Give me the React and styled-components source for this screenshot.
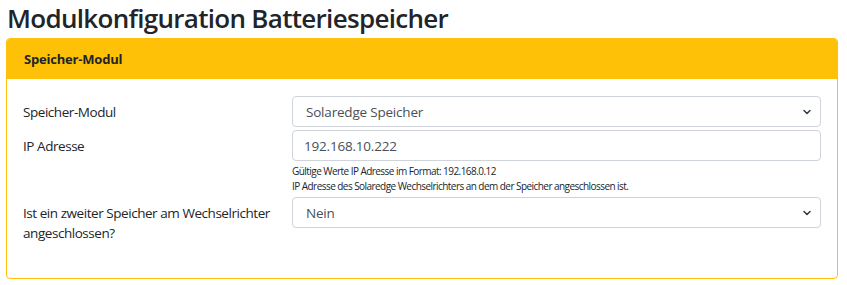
import React from "react";
import styled, { createGlobalStyle } from "styled-components";

const Global = createGlobalStyle`
  html, body { margin: 0; padding: 0; background: #fff; }
  body {
    font-family: "Open Sans", "Noto Sans", "Liberation Sans", sans-serif;
    color: #212529;
  }
  * { box-sizing: border-box; }
`;

const Page = styled.div`
  padding: 2px 9px 0 6px;
`;

const Title = styled.h1`
  margin: 0 0 4px 1px;
  font-size: 26px;
  font-weight: 600;
  line-height: 32px;
  color: #212529;
  letter-spacing: -0.7px;
`;

const Card = styled.section`
  border: 1px solid #ffc107;
  border-radius: 4px;
  overflow: hidden;
`;

const CardHeader = styled.header`
  background: #ffc107;
  height: 40px;
  display: flex;
  align-items: center;
  padding: 0 17px;
  font-size: 13px;
  font-weight: 700;
  letter-spacing: -0.2px;
  color: #212529;
`;

const CardBody = styled.div`
  padding: 17px 16px 35px 16px;
  display: flex;
  flex-direction: column;
  gap: 3px;
`;

const Row = styled.div`
  display: grid;
  grid-template-columns: 269px 1fr;
  align-items: start;
`;

const Label = styled.label`
  font-size: 13.5px;
  line-height: 20px;
  padding-top: 6px;
  letter-spacing: -0.45px;
`;

const Field = styled.div`
  display: flex;
  flex-direction: column;
`;

const Control = styled.div`
  height: 31px;
  border: 1px solid #ced4da;
  border-radius: 4px;
  display: flex;
  align-items: center;
  justify-content: space-between;
  padding: 0 8px 0 ${(p) => (p.$select ? "13px" : "11px")};
  font-size: 13.5px;
  letter-spacing: -0.2px;
  color: #495057;
  background: #fff;
`;

const Help = styled.div`
  font-size: 10px;
  line-height: 15px;
  color: #212529;
  margin-top: 3px;
  letter-spacing: -0.55px;
`;

const Chevron = () => (
  <svg width="10" height="8" viewBox="0 0 16 16">
    <path d="M2 5l6 6 6-6" fill="none" stroke="#343a40" strokeWidth="3" strokeLinecap="round" strokeLinejoin="round" />
  </svg>
);

export default function App() {
  return (
    <Page>
      <Global />
      <Title>Modulkonfiguration Batteriespeicher</Title>
      <Card>
        <CardHeader>Speicher-Modul</CardHeader>
        <CardBody>
          <Row>
            <Label>Speicher-Modul</Label>
            <Field>
              <Control $select>
                <span>Solaredge Speicher</span>
                <Chevron />
              </Control>
            </Field>
          </Row>
          <Row>
            <Label>IP Adresse</Label>
            <Field>
              <Control>192.168.10.222</Control>
              <Help>
                Gültige Werte IP Adresse im Format: 192.168.0.12
                <br />
                IP Adresse des Solaredge Wechselrichters an dem der Speicher angeschlossen ist.
              </Help>
            </Field>
          </Row>
          <Row>
            <Label>Ist ein zweiter Speicher am Wechselrichter angeschlossen?</Label>
            <Field>
              <Control $select>
                <span>Nein</span>
                <Chevron />
              </Control>
            </Field>
          </Row>
        </CardBody>
      </Card>
    </Page>
  );
}
